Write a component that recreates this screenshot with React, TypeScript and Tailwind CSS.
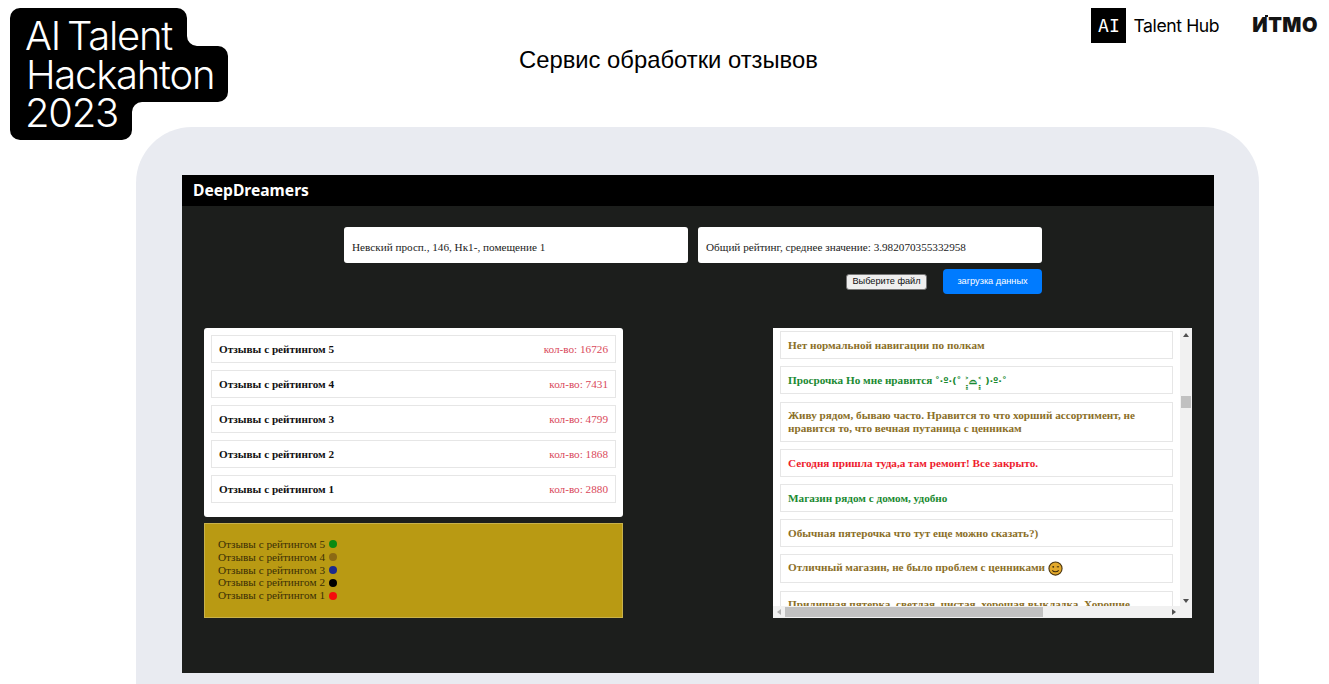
const ratings = [
  { label: "Отзывы с рейтингом 5", count: "кол-во: 16726", dot: "bg-[#0b8a12]" },
  { label: "Отзывы с рейтингом 4", count: "кол-во: 7431", dot: "bg-[#8b6914]" },
  { label: "Отзывы с рейтингом 3", count: "кол-во: 4799", dot: "bg-[#1c2a8c]" },
  { label: "Отзывы с рейтингом 2", count: "кол-во: 1868", dot: "bg-black" },
  { label: "Отзывы с рейтингом 1", count: "кол-во: 2880", dot: "bg-[#f50c0c]" },
];

const brown = "text-[#8b6f28]";
const green = "text-[#1b8a32]";
const red = "text-[#ee1c2e]";

const reviews = [
  { text: "Нет нормальной навигации по полкам", color: brown, h: "h-[28px]", mb: "mb-[7px]" },
  { text: "Просрочка Но мне нравится ", kaomoji: "˚‧º·(˚ ˃̣̣̥⌓˂̣̣̥ )‧º·˚", color: green, h: "h-[28px]", mb: "mb-[8px]" },
  { text: "Живу рядом, бываю часто. Нравится то что хорший ассортимент, не нравится то, что вечная путаница с ценникам", color: brown, h: "h-[40px]", mb: "mb-[7px]" },
  { text: "Сегодня пришла туда,а там ремонт! Все закрыто.", color: red, h: "h-[28px]", mb: "mb-[7px]" },
  { text: "Магазин рядом с домом, удобно", color: green, h: "h-[28px]", mb: "mb-[7px]" },
  { text: "Обычная пятерочка что тут еще можно сказать?)", color: brown, h: "h-[28px]", mb: "mb-[7px]" },
  { text: "Отличный магазин, не было проблем с ценниками", color: brown, h: "h-[29px]", mb: "mb-[8px]", smile: true },
  { text: "Приличная пятерка, светлая, чистая, хорошая выкладка. Хорошие продавцы", color: brown, h: "h-[40px]", mb: "" },
];

function Smile() {
  return (
    <svg width="15" height="15" viewBox="0 0 16 16" className="ml-[3px] inline-block align-[-5px]">
      <circle cx="8" cy="8" r="7" fill="#e3a92c" stroke="#4a3510" strokeWidth="1.2" />
      <circle cx="5.6" cy="6.2" r="1" fill="#3a2a0c" />
      <path d="M9.4 6.2h2.4" stroke="#3a2a0c" strokeWidth="1.1" />
      <path d="M4.6 10c1.6 2 5 2 6.8 0" fill="none" stroke="#3a2a0c" strokeWidth="1.1" />
    </svg>
  );
}

function Logo() {
  return (
    <div className="relative h-[132px] w-[218px] font-['Inter',sans-serif] text-[40px] font-light leading-[38.5px] tracking-[-1.25px] text-white">
      <svg width="218" height="132" viewBox="0 0 218 132" className="absolute inset-0">
        <path
          d="M10 0H167a10 10 0 0 1 10 10V28a10 10 0 0 0 10 10H208a10 10 0 0 1 10 10V84a10 10 0 0 1-10 10H132a10 10 0 0 0-10 10V122a10 10 0 0 1-10 10H10a10 10 0 0 1-10-10V10A10 10 0 0 1 10 0Z"
          fill="#000"
        />
      </svg>
      <div className="relative pl-[15px] pt-[9px] [word-spacing:-3px]">
        <div>AI Talent</div>
        <div className="pl-[1px]">Hackahton</div>
        <div>2023</div>
      </div>
    </div>
  );
}

function Partners() {
  return (
    <div className="flex items-start">
      <div className="flex h-[35px] w-[35px] items-center justify-center bg-black font-['DejaVu_Sans_Mono',monospace] text-[18px] text-white">AI</div>
      <span className="ml-[7px] mt-[6px] font-['Inter',sans-serif] text-[17.6px] leading-[24px] tracking-[-0.4px] text-black">Talent Hub</span>
      <span className="relative ml-[33px] mr-[11px] mt-[5px] font-['Inter',sans-serif] text-[20px] font-black leading-[25px] tracking-[0.5px] text-[#141414]">
        ИTMO
        <span className="absolute left-[13px] top-[2px] h-[2px] w-[3px] bg-[#141414]" />
      </span>
    </div>
  );
}

function VScrollbar() {
  return (
    <div className="flex w-[12px] shrink-0 flex-col items-center bg-[#f1f1f1]">
      <div className="mt-[5px] h-0 w-0 border-x-[3px] border-b-[4px] border-x-transparent border-b-[#505050]" />
      <div className="mt-[59px] h-[12px] w-[10px] bg-[#c1c1c1]" />
      <div className="mt-auto mb-[3px] h-0 w-0 border-x-[3px] border-t-[4px] border-x-transparent border-t-[#505050]" />
    </div>
  );
}

function HScrollbar() {
  return (
    <div className="flex h-[12px] shrink-0 items-center bg-[#f1f1f1]">
      <div className="ml-[4px] h-0 w-0 border-y-[3px] border-r-[4px] border-y-transparent border-r-[#b0b0b0]" />
      <div className="ml-[4px] h-[10px] w-[258px] bg-[#c1c1c1]" />
      <div className="ml-[129px] h-0 w-0 border-y-[3px] border-l-[4px] border-y-transparent border-l-[#505050]" />
    </div>
  );
}

export default function App() {
  return (
    <div className="flex h-[684px] w-[1329px] flex-col overflow-hidden bg-white font-['Liberation_Serif',serif]">
      <header className="flex h-[127px] shrink-0 items-start pl-[10px] pt-[8px]">
        <div className="relative z-10">
          <Logo />
        </div>
        <h1 className="ml-[291px] mr-auto mt-[38px] font-['Liberation_Sans',sans-serif] text-[23.8px] font-normal leading-[28px] text-black">
          Сервис обработки отзывов
        </h1>
        <Partners />
      </header>

      <div className="ml-[136px] mr-[70px] flex-1 rounded-t-[56px] bg-[#e9ebf1] pl-[46px] pr-[45px] pt-[48px]">
        <div className="flex h-[498px] flex-col bg-[#1c1e1c]">
          <div className="flex h-[31px] shrink-0 items-center bg-black pl-[11px] font-['Noto_Sans',sans-serif] text-[15.6px] font-bold text-white">
            DeepDreamers
          </div>

          <div className="mt-[21px] flex justify-center gap-[10px] pr-[10px] text-[11.2px] text-[#222]">
            <div className="flex h-[36px] w-[344px] items-center rounded-[3px] bg-white pl-[8px] pt-[4px]">Невский просп., 146, Нк1-, помещение 1</div>
            <div className="flex h-[36px] w-[344px] items-center rounded-[3px] bg-white pl-[8px] pt-[4px]">Общий рейтинг, среднее значение: 3.982070355332958</div>
          </div>

          <div className="mr-[172px] mt-[6px] flex h-[25px] items-center justify-end font-['Liberation_Sans',sans-serif] text-[9.2px]">
            <button className="h-[16px] w-[81px] rounded-[3px] border border-[#777] bg-[#efefef] text-[#111]">Выберите файл</button>
            <button className="ml-[16px] h-[25px] w-[99px] rounded-[4px] bg-[#007bff] text-white">загрузка данных</button>
          </div>

          <div className="mt-[34px] flex justify-between pl-[22px] pr-[22px]">
            <div className="flex w-[419px] flex-col gap-[6px]">
              <div className="flex h-[189px] flex-col gap-[7px] rounded-[3px] bg-white px-[7px] pt-[7px]">
                {ratings.map((r) => (
                  <div key={r.label} className="flex h-[28px] items-center justify-between border border-[#e6e6e6] px-[7px] text-[11.2px]">
                    <span className="font-bold text-[#111]">{r.label}</span>
                    <span className="text-[#d9485a]">{r.count}</span>
                  </div>
                ))}
              </div>
              <div className="h-[95px] border border-[#c9b24a] bg-[#b99a13] pl-[13px] pt-[14px] text-[11.2px] leading-[12.8px] text-[#3b2f06]">
                {ratings.map((r) => (
                  <div key={r.label} className="flex items-center">
                    {r.label}
                    <span className={`ml-[4px] h-[8px] w-[8px] rounded-full ${r.dot}`} />
                  </div>
                ))}
              </div>
            </div>

            <div className="flex h-[290px] w-[419px] flex-col bg-white">
              <div className="flex min-h-0 flex-1">
                <div className="min-w-0 flex-1 overflow-hidden pl-[7px] pr-[7px] pt-[3px]">
                  {reviews.map((r) => (
                    <div key={r.text} className={`flex shrink-0 items-center border border-[#e6e6e6] px-[7px] text-[11.2px] font-bold leading-[13px] ${r.h} ${r.mb} ${r.color}`}>
                      <span>
                        {r.text}
                        {r.kaomoji && <span className="font-['DejaVu_Sans',sans-serif] text-[9.5px] font-bold">{r.kaomoji}</span>}
                        {r.smile && <Smile />}
                      </span>
                    </div>
                  ))}
                </div>
                <VScrollbar />
              </div>
              <HScrollbar />
            </div>
          </div>
        </div>
      </div>
    </div>
  );
}
